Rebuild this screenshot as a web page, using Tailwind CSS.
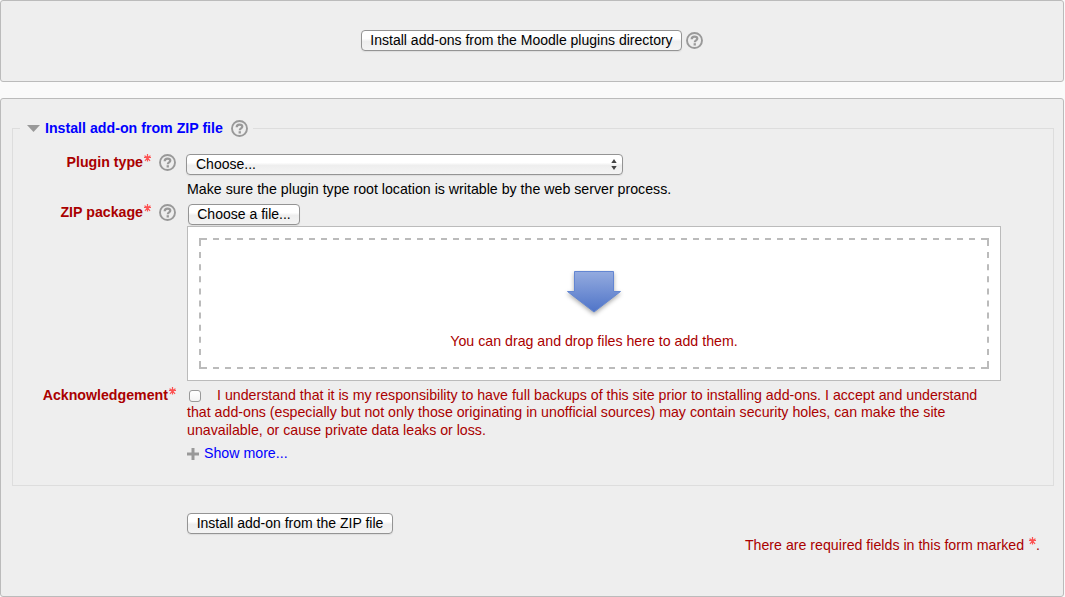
<!DOCTYPE html>
<html lang="en">
<head>
<meta charset="utf-8">
<title>Install add-ons</title>
<script src="https://cdn.jsdelivr.net/npm/@tailwindcss/browser@4"></script>
</head>
<body class="h-[597px] w-[1065px] overflow-hidden bg-[#fafafa] font-['Liberation_Sans',Arial,sans-serif] text-[14.19px] leading-[17.5px] text-black">
<svg class="hidden">
  <symbol id="help" viewBox="0 0 17 17"><circle cx="8.500" cy="8.500" r="7.500" fill="none" stroke="#999" stroke-width="1.900"/><path d="M5.700 7.200C5.700 5.400 6.900 4.600 8.500 4.600s2.800.8 2.800 2.200c0 1.700-2.500 1.600-2.500 3.400" fill="none" stroke="#999" stroke-width="2.200"/><rect x="7.600" y="11.200" width="2.300" height="2.300" fill="#999"/></symbol>
  <symbol id="req" viewBox="0 0 8 8"><path d="M4.500 0v7.500M1 3.500h7M4.500 3.500l-2.500 3.500M4.500 3.500l2.500 3.500M4.500 3.500l-3-1.800M4.500 3.500l3-1.800" fill="none" stroke="#ff3535" stroke-opacity=".85" stroke-width="1.200"/></symbol>
</svg>

<section class="flex h-[82px] w-[1064px] justify-center rounded-[3px] border border-[#bbb] bg-[#eee] pt-[29px]">
  <button class="h-[21px] w-[321px] rounded-[4px] border border-[#949494] bg-linear-to-b from-white from-40% via-[#eee] via-55% to-[#f4f4f4] pb-px text-[14.03px] leading-[18px] whitespace-nowrap shadow-[0_1px_1px_#ddd]">Install add-ons from the Moodle plugins directory</button>
  <svg class="mt-[2px] ml-1 size-[17px]"><use href="#help"/></svg>
</section>

<section class="mt-4 h-[499px] w-[1064px] rounded-[3px] border border-[#bbb] bg-[#eee] pt-[19px] pl-[11px]">
  <fieldset class="h-[368px] w-[1042px] border border-[#ddd] pl-[7px]">
    <legend class="flex h-[21px] w-[233px] items-center pl-[7px] font-bold text-[#00f]">
      <svg class="h-[7px] w-[13px]" viewBox="0 0 13 7"><path d="M0 0h13L6.500 7z" fill="#999"/></svg>
      <span class="ml-[5px] w-[178px] whitespace-nowrap">Install add-on from ZIP file</span>
      <svg class="ml-2 size-[17px]"><use href="#help"/></svg>
    </legend>
    <div class="-ml-[7px] grid grid-cols-[163px_1fr] gap-x-[11px] pt-[15px]">
      <div class="flex h-[50px] justify-end font-bold text-[#a00]">
        <span class="whitespace-nowrap">Plugin type</span><svg class="mr-2 size-2"><use href="#req"/></svg><svg class="size-[17px]"><use href="#help"/></svg>
      </div>
      <div class="h-[50px]">
        <div class="-ml-px flex h-[21px] w-[437px] items-center rounded-[4px] border border-[#949494] bg-linear-to-b from-white from-40% via-[#eee] via-55% to-[#f4f4f4] pr-[5px] pl-[9px] text-[14px] shadow-[0_1px_1px_#ddd]">
          <span class="flex-1">Choose...</span>
          <svg class="h-[11px] w-[6px]" viewBox="0 0 6 11"><path d="M3 0l2.700 4H.3zM3 11L.3 7h5.400z" fill="#444"/></svg>
        </div>
        <p class="mt-[6px] whitespace-nowrap">Make sure the plugin type root location is writable by the web server process.</p>
      </div>
      <div class="flex justify-end font-bold text-[#a00]">
        <span class="whitespace-nowrap">ZIP package</span><svg class="mr-2 size-2"><use href="#req"/></svg><svg class="size-[17px]"><use href="#help"/></svg>
      </div>
      <div class="h-[183px]">
        <button class="ml-px block h-[21px] w-[112px] rounded-[4px] border border-[#949494] bg-linear-to-b from-white from-40% via-[#eee] via-55% to-[#f4f4f4] pb-px text-[14.03px] leading-[18px] whitespace-nowrap shadow-[0_1px_1px_#ddd]">Choose a file...</button>
        <div class="mt-px h-[155px] w-[814px] border border-[#bbb] bg-white p-[11px]">
          <div class="relative flex h-[131px] w-[790px] flex-col items-center pt-[32px] text-[#a00]">
            <svg class="absolute inset-0 h-[131px] w-[790px]" viewBox="0 0 790 131" fill="none" stroke="#bbb" stroke-width="2">
              <path d="M2 1h786M2 130h786" stroke-dasharray="6 6"/>
              <path d="M1 2v127M789 2v127" stroke-dasharray="6 6.100"/>
              <path d="M0 1h2M788 1h2M0 130h2M788 130h2"/>
            </svg>
            <svg class="h-[50px] w-[60px]" viewBox="0 0 60 50">
              <defs><linearGradient id="arrow" x2="0" y2="1"><stop stop-color="#94abdf"/><stop offset="1" stop-color="#4f74c8"/></linearGradient></defs>
              <path d="M10.500 1.500h39v20h7L30 42 3.500 21.500h7z" fill="url(#arrow)" stroke="#6386d2" class="drop-shadow-[0_2px_2px_#0005]"/>
            </svg>
            <p class="mt-[13px] whitespace-nowrap">You can drag and drop files here to add them.</p>
          </div>
        </div>
      </div>
      <div class="flex justify-end font-bold text-[#a00]">
        <span class="whitespace-nowrap">Acknowledgement</span><svg class="size-2"><use href="#req"/></svg>
      </div>
      <div>
        <div class="w-[814px] text-[#a00]">
          <div class="flex h-[17px]"><span class="mt-[3px] mr-[16px] ml-[2px] size-3 rounded-[3px] border border-[#999] bg-linear-to-b from-white to-[#f3f3f3]"></span><span class="whitespace-nowrap">I understand that it is my responsibility to have full backups of this site prior to installing add-ons. I accept and understand</span></div>
          <p class="-mt-px leading-[18px] whitespace-nowrap">that add-ons (especially but not only those originating in unofficial sources) may contain security holes, can make the site<br>unavailable, or cause private data leaks or loss.</p>
        </div>
        <a class="mt-[6px] flex items-center text-[#00f]"><svg class="mt-px mr-[5px] size-[12px]" viewBox="0 0 12 12"><path d="M6 0v12M0 6h12" stroke="#999" stroke-width="3"/></svg>Show more...</a>
      </div>
    </div>
  </fieldset>
  <button class="mt-[27px] ml-[175px] block h-[21px] w-[206px] rounded-[4px] border border-[#949494] bg-linear-to-b from-white from-40% via-[#eee] via-55% to-[#f4f4f4] pb-px text-[14.03px] leading-[18px] whitespace-nowrap shadow-[0_1px_1px_#ddd]">Install add-on from the ZIP file</button>
  <p class="mt-[3px] mr-[23px] flex justify-end whitespace-nowrap text-[#a00]">There are required fields in this form marked <svg class="ml-1 size-2"><use href="#req"/></svg>.</p>
</section>
</body>
</html>
